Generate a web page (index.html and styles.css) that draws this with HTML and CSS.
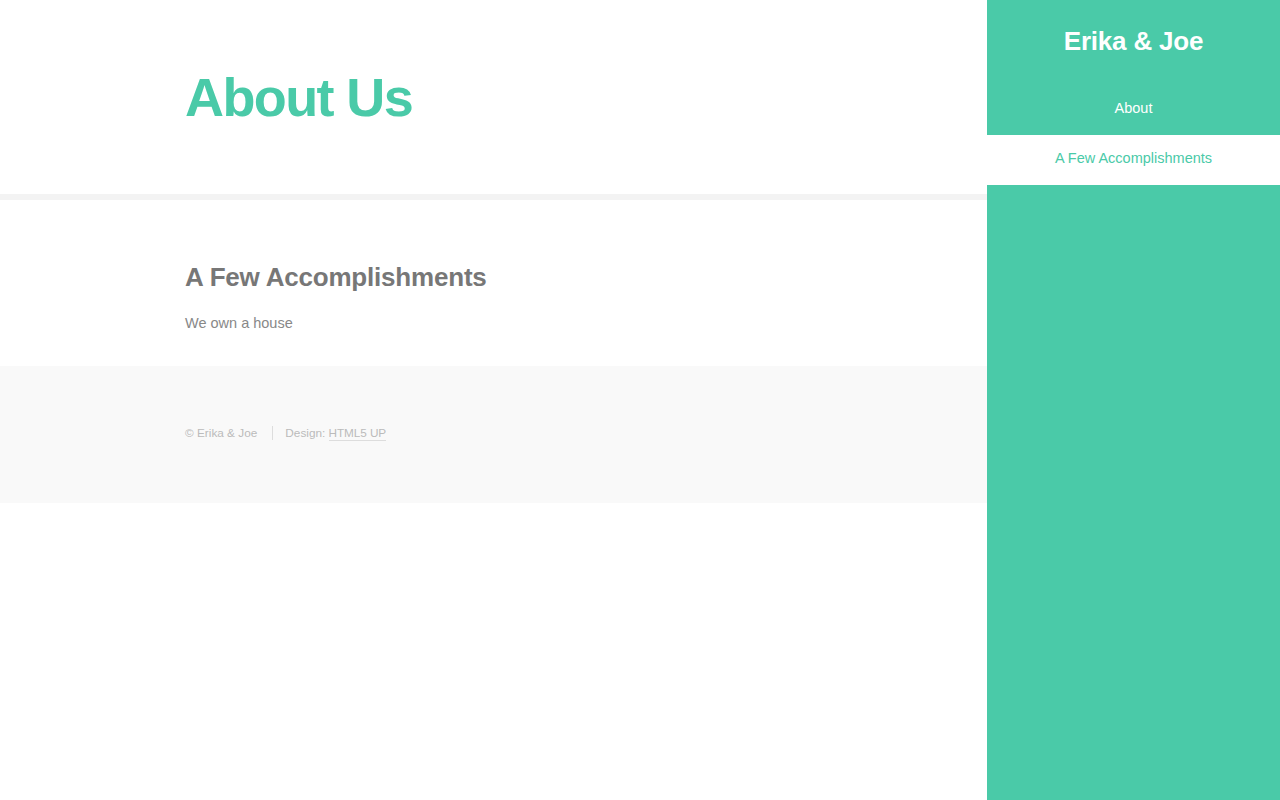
FILE: index.html
```html
<!DOCTYPE html>
<html lang="en">
<head>
    <meta charset="UTF-8">
    <meta name="viewport" content="width=device-width, initial-scale=1.0">
    <title>About Us - Erika &amp; Joe</title>
    <link rel="stylesheet" href="styles.css">
</head>
<body>
    <div class="page">
        <div class="main">
            <header class="page-header">
                <h1>About Us</h1>
            </header>

            <section class="wrapper">
                <h2>A Few Accomplishments</h2>
                <p>We own a house</p>
            </section>

            <footer class="footer">
                <ul class="copyright">
                    <li>&copy; Erika &amp; Joe</li>
                    <li>Design: <a href="#">HTML5 UP</a></li>
                </ul>
            </footer>
        </div>

        <nav class="sidebar">
            <div class="logo">Erika &amp; Joe</div>
            <ul class="menu">
                <li><a href="#">About</a></li>
                <li class="active"><a href="#">A Few Accomplishments</a></li>
            </ul>
        </nav>
    </div>
</body>
</html>
```

FILE: styles.css
```css
body {
    margin: 0;
    padding: 0;
    background: #ffffff;
    color: #888888;
    font-family: "Liberation Sans", Arial, sans-serif;
    font-size: 14.5px;
}
.page {
    display: flex;
    min-height: 100vh;
}
.main {
    flex: 1;
}
.page-header {
    padding: 70px 185px;
    border-bottom: 6px solid #f3f3f3;
}
.page-header h1 {
    margin: 0;
    font-size: 54px;
    line-height: 1;
    letter-spacing: -1.6px;
    color: #4acaa8;
}
.wrapper {
    padding: 62px 185px 31px;
}
.wrapper h2 {
    margin: 0 0 19px;
    font-size: 26px;
    line-height: 1.2;
    letter-spacing: -0.2px;
    color: #777777;
}
.wrapper p {
    margin: 0;
    line-height: 1.6;
}
.footer {
    background: #f9f9f9;
    padding: 58px 185px 61px;
}
.copyright {
    list-style: none;
    margin: 0;
    padding: 0;
    display: flex;
    align-items: center;
    font-size: 11.8px;
    line-height: 18px;
    color: #bbbbbb;
}
.copyright li + li {
    border-left: 1px solid #dddddd;
    margin-left: 15px;
    padding-left: 12px;
    line-height: 14px;
}
.copyright a {
    color: #bbbbbb;
    text-decoration: none;
    border-bottom: 1px solid #dddddd;
    letter-spacing: -0.1px;
}
.sidebar {
    width: 293px;
    flex-shrink: 0;
    background: #4acaa8;
    text-align: center;
}
.logo {
    padding: 25px 0 28px;
    font-size: 26px;
    line-height: 32px;
    font-weight: bold;
    letter-spacing: -0.2px;
    color: #ffffff;
}
.menu {
    list-style: none;
    margin: 0;
    padding: 0;
}
.menu a {
    display: block;
    height: 50px;
    line-height: 47px;
    color: #ffffff;
    text-decoration: none;
}
.menu .active a {
    background: #ffffff;
    color: #4acaa8;
}
```
